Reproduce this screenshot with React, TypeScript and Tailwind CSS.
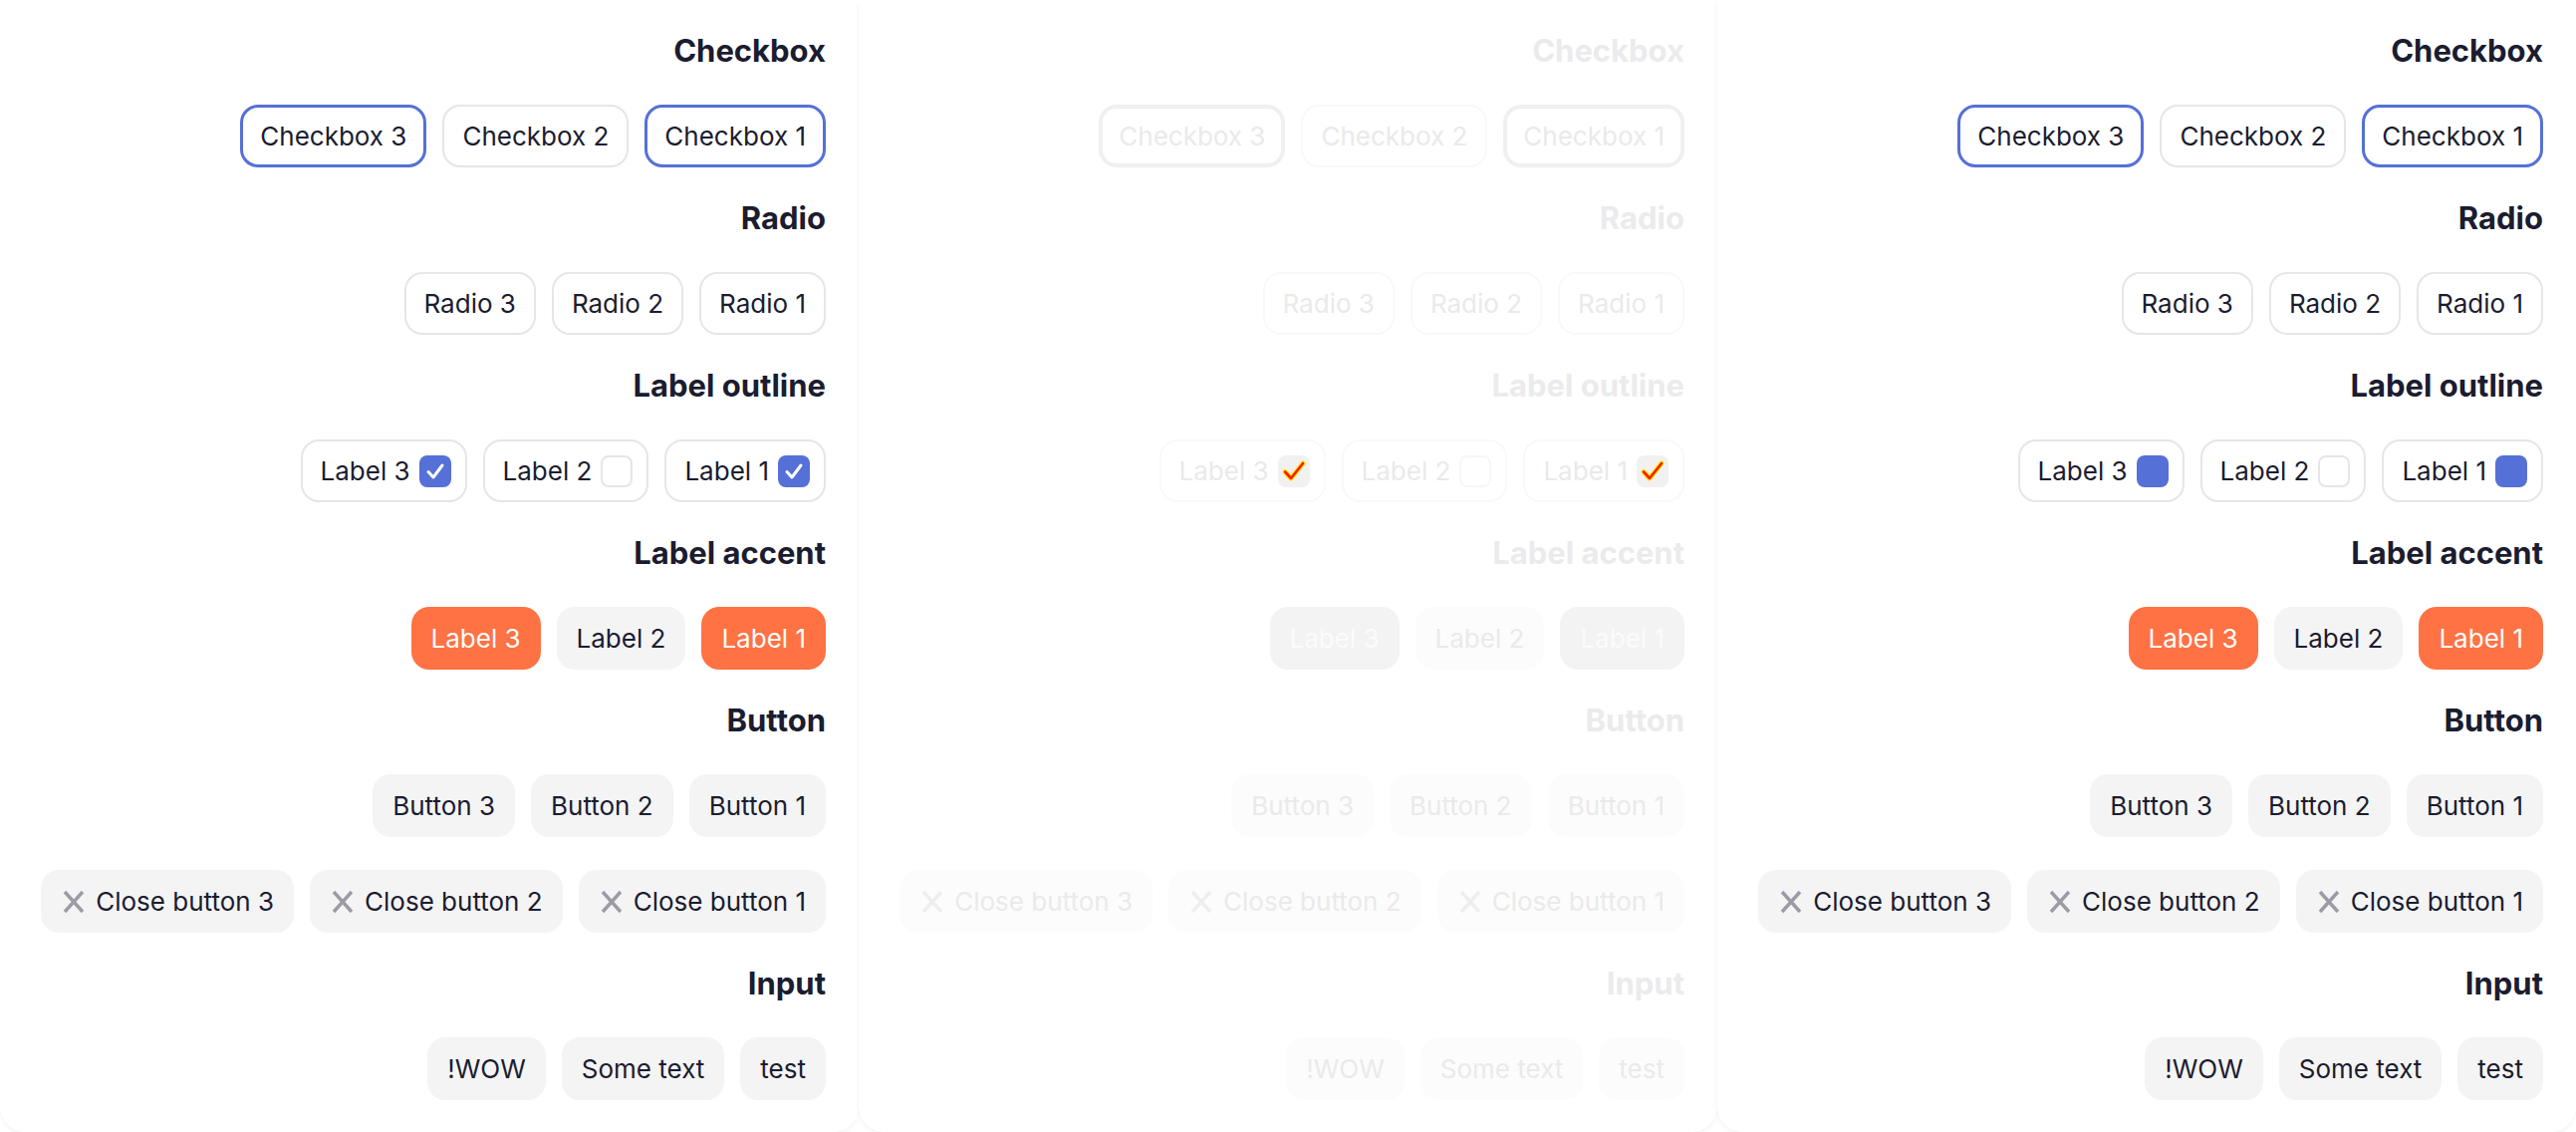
import React from 'react'

type Tone = 'normal' | 'faded' | 'alt'

const font = { fontFamily: 'Inter, "Noto Sans", sans-serif' }

function Heading({ children, faded }: { children: React.ReactNode; faded: boolean }) {
  return (
    <h2
      className={
        faded
          ? 'text-[31px] leading-[36px] font-bold text-[#ebebed]'
          : 'text-[31px] leading-[36px] font-bold text-[#1b1c30]'
      }
    >
      {children}
    </h2>
  )
}

function Row({ children }: { children: React.ReactNode }) {
  return <div className="flex justify-end gap-4">{children}</div>
}

function OutlineChip({ label, selected, faded }: { label: string; selected: boolean; faded: boolean }) {
  let cls = 'h-[63px] flex items-center rounded-[18px] text-[26px] '
  if (faded) {
    cls += selected ? 'border-[4px] border-[#f0f0f0] px-[16px] text-[#eaeaea]' : 'border-2 border-[#f9f9f9] px-[18px] text-[#eaeaea]'
  } else {
    cls += selected ? 'border-[3px] border-[#5570d6] px-[17px] text-[#1b1c30]' : 'border-2 border-[#e6e6e6] px-[18px] text-[#1b1c30]'
  }
  return <div className={cls}>{label}</div>
}

function Check({ checked, tone }: { checked: boolean; tone: Tone }) {
  if (!checked) {
    return (
      <span
        className={
          tone === 'faded'
            ? 'w-[32px] h-[32px] rounded-[8px] border-2 border-[#f7f7f7] bg-white'
            : 'w-[32px] h-[32px] rounded-[8px] border-2 border-[#e6e6e6] bg-white'
        }
      />
    )
  }
  if (tone === 'alt') {
    return <span className="w-[32px] h-[32px] rounded-[8px] bg-[#5570d6]" />
  }
  if (tone === 'faded') {
    return (
      <span className="w-[32px] h-[32px] rounded-[8px] bg-[#f1f1f1] flex items-center justify-center">
        <svg width="26" height="26" viewBox="0 0 26 26" fill="none">
          <path d="M4 13.5 L10 20 L22 5" stroke="#ffe600" strokeWidth="5" strokeLinecap="round" strokeLinejoin="round" />
          <path d="M4 13.5 L10 20 L22 5" stroke="#ff1a00" strokeWidth="2.6" strokeLinecap="round" strokeLinejoin="round" />
        </svg>
      </span>
    )
  }
  return (
    <span className="w-[32px] h-[32px] rounded-[8px] bg-[#5570d6] flex items-center justify-center">
      <svg width="24" height="24" viewBox="0 0 24 24" fill="none">
        <path d="M5 12.5 L10 18 L19 6" stroke="white" strokeWidth="3" strokeLinecap="round" strokeLinejoin="round" />
      </svg>
    </span>
  )
}

function LabelOutline({ label, checked, tone }: { label: string; checked: boolean; tone: Tone }) {
  const faded = tone === 'faded'
  return (
    <div
      className={
        faded
          ? 'h-[63px] flex items-center gap-[9px] pl-[18px] pr-[14px] rounded-[18px] border-2 border-[#f9f9f9] text-[26px] text-[#eaeaea]'
          : 'h-[63px] flex items-center gap-[9px] pl-[18px] pr-[14px] rounded-[18px] border-2 border-[#e6e6e6] text-[26px] text-[#1b1c30]'
      }
    >
      <span>{label}</span>
      <Check checked={checked} tone={tone} />
    </div>
  )
}

function AccentChip({ label, selected, faded }: { label: string; selected: boolean; faded: boolean }) {
  let cls = 'h-[63px] flex items-center px-[20px] rounded-[18px] text-[26px] '
  if (faded) cls += selected ? 'bg-[#f3f3f3] text-[#fbfbfb]' : 'bg-[#fcfcfc] text-[#eaeaea]'
  else cls += selected ? 'bg-[#ff7243] text-white' : 'bg-[#f4f4f4] text-[#1b1c30]'
  return <div className={cls}>{label}</div>
}

function Plain({ children, faded }: { children: React.ReactNode; faded: boolean }) {
  return (
    <div
      className={
        faded
          ? 'h-[63px] flex items-center gap-[10px] px-[20px] rounded-[18px] text-[26px] bg-[#fcfcfc] text-[#eaeaea]'
          : 'h-[63px] flex items-center gap-[10px] px-[20px] rounded-[18px] text-[26px] bg-[#f4f4f4] text-[#1b1c30]'
      }
    >
      {children}
    </div>
  )
}

function XIcon({ faded }: { faded: boolean }) {
  return (
    <svg width="24" height="26" viewBox="0 0 24 26" fill="none" className="ml-[1px]">
      <path
        d="M3 3 L21 23 M21 3 L3 23"
        stroke={faded ? '#eeeeee' : '#9b9ba6'}
        strokeWidth="3.4"
      />
    </svg>
  )
}

function Panel({ tone }: { tone: Tone }) {
  const faded = tone === 'faded'
  return (
    <div className="w-[862px] h-[1136px] bg-white rounded-b-[26px] shadow-[0_2px_5px_rgba(0,0,0,0.05)] flex flex-col items-end gap-[33px] pt-[33px] px-[33px]">
      <section className="flex flex-col items-end gap-[36px]">
        <Heading faded={faded}>Checkbox</Heading>
        <Row>
          <OutlineChip label="Checkbox 3" selected faded={faded} />
          <OutlineChip label="Checkbox 2" selected={false} faded={faded} />
          <OutlineChip label="Checkbox 1" selected faded={faded} />
        </Row>
      </section>
      <section className="flex flex-col items-end gap-[36px]">
        <Heading faded={faded}>Radio</Heading>
        <Row>
          <OutlineChip label="Radio 3" selected={false} faded={faded} />
          <OutlineChip label="Radio 2" selected={false} faded={faded} />
          <OutlineChip label="Radio 1" selected={false} faded={faded} />
        </Row>
      </section>
      <section className="flex flex-col items-end gap-[36px]">
        <Heading faded={faded}>Label outline</Heading>
        <Row>
          <LabelOutline label="Label 3" checked tone={tone} />
          <LabelOutline label="Label 2" checked={false} tone={tone} />
          <LabelOutline label="Label 1" checked tone={tone} />
        </Row>
      </section>
      <section className="flex flex-col items-end gap-[36px]">
        <Heading faded={faded}>Label accent</Heading>
        <Row>
          <AccentChip label="Label 3" selected faded={faded} />
          <AccentChip label="Label 2" selected={false} faded={faded} />
          <AccentChip label="Label 1" selected faded={faded} />
        </Row>
      </section>
      <section className="flex flex-col items-end gap-[36px]">
        <Heading faded={faded}>Button</Heading>
        <Row>
          <Plain faded={faded}>Button 3</Plain>
          <Plain faded={faded}>Button 2</Plain>
          <Plain faded={faded}>Button 1</Plain>
        </Row>
      </section>
      <Row>
        {['Close button 3', 'Close button 2', 'Close button 1'].map(t => (
          <Plain key={t} faded={faded}>
            <XIcon faded={faded} />
            <span>{t}</span>
          </Plain>
        ))}
      </Row>
      <section className="flex flex-col items-end gap-[36px]">
        <Heading faded={faded}>Input</Heading>
        <Row>
          <Plain faded={faded}>!WOW</Plain>
          <Plain faded={faded}>Some text</Plain>
          <Plain faded={faded}>test</Plain>
        </Row>
      </section>
    </div>
  )
}

export default function App() {
  return (
    <div className="w-[2586px] h-[1136px] overflow-hidden bg-white flex" style={font}>
      <Panel tone="normal" />
      <Panel tone="faded" />
      <Panel tone="alt" />
    </div>
  )
}
